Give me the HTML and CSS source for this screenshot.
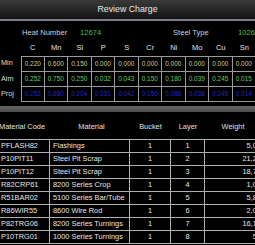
FILE: index.html
```html
<!doctype html>
<html lang="en">
<head>
    <meta charset="UTF-8">
    <title>Review Charge</title>
    <link rel="stylesheet" href="styles.css">
</head>
<body>
<div class="screen">
    <div class="topbar"><h1 class="topbar-title">Review Charge</h1></div>

    <div class="heat-row">
        <span class="heat-label">Heat Number</span>
        <span class="heat-value">12674</span>
        <span class="steel-label">Steel Type</span>
        <span class="steel-value">1026</span>
    </div>

    <div class="chem">
        <div class="chem-head">
            <span>C</span><span>Mn</span><span>Si</span><span>P</span><span>S</span>
            <span>Cr</span><span>Ni</span><span>Mo</span><span>Cu</span><span>Sn</span>
        </div>
        <div class="chem-row min">
            <span class="row-label">Min</span>
            <span class="cell">0.220</span><span class="cell">0.600</span><span class="cell">0.150</span><span class="cell">0.000</span><span class="cell">0.000</span>
            <span class="cell">0.000</span><span class="cell">0.000</span><span class="cell">0.000</span><span class="cell">0.000</span><span class="cell">0.000</span>
        </div>
        <div class="chem-row aim">
            <span class="row-label">Aim</span>
            <span class="cell">0.252</span><span class="cell">0.750</span><span class="cell">0.250</span><span class="cell">0.032</span><span class="cell">0.043</span>
            <span class="cell">0.150</span><span class="cell">0.180</span><span class="cell">0.039</span><span class="cell">0.245</span><span class="cell">0.015</span>
        </div>
        <div class="chem-row proj">
            <span class="row-label">Proj</span>
            <span class="cell">0.252</span><span class="cell">0.680</span><span class="cell">0.204</span><span class="cell">0.031</span><span class="cell">0.042</span>
            <span class="cell">0.150</span><span class="cell">0.086</span><span class="cell">0.038</span><span class="cell">0.245</span><span class="cell">0.014</span>
        </div>
    </div>

    <div class="divider"></div>

    <div class="materials">
        <div class="mat-head">
            <span class="c-code">Material Code</span>
            <span class="c-name">Material</span>
            <span class="c-bucket">Bucket</span>
            <span class="c-layer">Layer</span>
            <span class="c-weight">Weight</span>
        </div>
        <div class="mat-row">
            <span class="c-code">PFLASH82</span><span class="c-name">Flashings</span>
            <span class="c-bucket">1</span><span class="c-layer">1</span><span class="c-weight">5,040</span>
        </div>
        <div class="mat-row">
            <span class="c-code">P10PIT11</span><span class="c-name">Steel Pit Scrap</span>
            <span class="c-bucket">1</span><span class="c-layer">2</span><span class="c-weight">21,280</span>
        </div>
        <div class="mat-row">
            <span class="c-code">P10PIT12</span><span class="c-name">Steel Pit Scrap</span>
            <span class="c-bucket">1</span><span class="c-layer">3</span><span class="c-weight">18,740</span>
        </div>
        <div class="mat-row">
            <span class="c-code">R82CRP61</span><span class="c-name">8200 Series Crop</span>
            <span class="c-bucket">1</span><span class="c-layer">4</span><span class="c-weight">1,020</span>
        </div>
        <div class="mat-row">
            <span class="c-code">R51BAR02</span><span class="c-name">5100 Series Bar/Tube</span>
            <span class="c-bucket">1</span><span class="c-layer">5</span><span class="c-weight">5,860</span>
        </div>
        <div class="mat-row">
            <span class="c-code">R86WIR55</span><span class="c-name">8600 Wire Rod</span>
            <span class="c-bucket">1</span><span class="c-layer">6</span><span class="c-weight">2,080</span>
        </div>
        <div class="mat-row">
            <span class="c-code">P82TRG06</span><span class="c-name">8200 Series Turnings</span>
            <span class="c-bucket">1</span><span class="c-layer">7</span><span class="c-weight">16,120</span>
        </div>
        <div class="mat-row">
            <span class="c-code">P10TRG01</span><span class="c-name">1000 Series Turnings</span>
            <span class="c-bucket">1</span><span class="c-layer">8</span><span class="c-weight">520</span>
        </div>
    </div>
</div>
</body>
</html>
```

FILE: styles.css
```css
* {
    margin: 0;
    padding: 0;
    box-sizing: border-box;
}
html, body {
    background: #000;
    overflow: hidden;
}
body {
    font-family: "Liberation Sans", Arial, sans-serif;
    color: #ddd;
}
.screen {
    width: 255px;
    height: 245px;
    overflow: hidden;
    background: #000;
}

/* title bar */
.topbar {
    height: 21px;
    background: linear-gradient(#3a3a3a, #131313);
    border-bottom: 2px solid #7c808c;
    text-align: center;
}
.topbar-title {
    font-size: 8.8px;
    font-weight: normal;
    line-height: 19px;
    color: #e8e8e8;
}

/* heat / steel type */
.heat-row {
    display: flex;
    height: 14px;
    margin-top: 5px;
    padding-left: 22px;
    font-size: 7.6px;
    line-height: 14px;
    white-space: nowrap;
}
.heat-row span {
    flex-shrink: 0;
}
.heat-label {
    width: 58px;
    color: #d0d0d0;
}
.heat-value {
    width: 93px;
    color: #3fc43f;
}
.steel-label {
    width: 65px;
    color: #d0d0d0;
}
.steel-value {
    color: #3fc43f;
}

/* chemistry table */
.chem-head {
    display: flex;
    height: 16px;
    padding-left: 21px;
    font-size: 7.5px;
    line-height: 16px;
    color: #e0e0e0;
}
.chem-head span {
    flex: 0 0 23.5px;
    text-align: center;
}
.chem-row {
    display: flex;
    height: 15px;
    font-size: 6.4px;
    line-height: 14px;
    white-space: nowrap;
}
.chem-row.min {
    height: 16px;
}
.row-label {
    flex: 0 0 21px;
    padding-left: 1px;
    font-size: 7.3px;
    color: #dcdcdc;
}
.cell {
    flex: 0 0 23.5px;
    text-align: center;
    border-right: 1px solid #9a9a9a;
    border-bottom: 1px solid #9a9a9a;
}
.row-label + .cell {
    border-left: 1px solid #9a9a9a;
}
.min .cell {
    border-top: 1px solid #9a9a9a;
    color: #cfcf86;
}
.aim .cell {
    color: #5fcf5f;
}
.proj .cell {
    color: #2424c0;
}

.divider {
    height: 6px;
    margin-top: 4px;
    background: linear-gradient(#666, #4a4a4a);
}

/* materials */
.materials {
    margin-left: -2px;
    font-size: 7.4px;
    white-space: nowrap;
}
.mat-head {
    display: flex;
    height: 28px;
    line-height: 30px;
    border-bottom: 1px solid #b0b0b0;
    color: #e0e0e0;
}
.mat-head span {
    text-align: center;
}
.mat-head .c-code {
    text-align: left;
    padding-left: 1px;
}
.mat-row {
    display: flex;
    height: 13px;
    line-height: 12px;
    border-bottom: 1px solid #b0b0b0;
    color: #e6e6e6;
}
.mat-row span {
    border-right: 1px solid #b0b0b0;
}
.c-code {
    flex: 0 0 52px;
    padding-left: 3px;
}
.c-name {
    flex: 0 0 80px;
    padding-left: 3px;
}
.c-bucket {
    flex: 0 0 41px;
    text-align: center;
}
.c-layer {
    flex: 0 0 34px;
    text-align: center;
}
.c-weight {
    flex: 0 0 64px;
    text-align: right;
    padding-right: 3px;
}
.mat-head .c-weight {
    text-align: center;
    padding-right: 8px;
}
```
